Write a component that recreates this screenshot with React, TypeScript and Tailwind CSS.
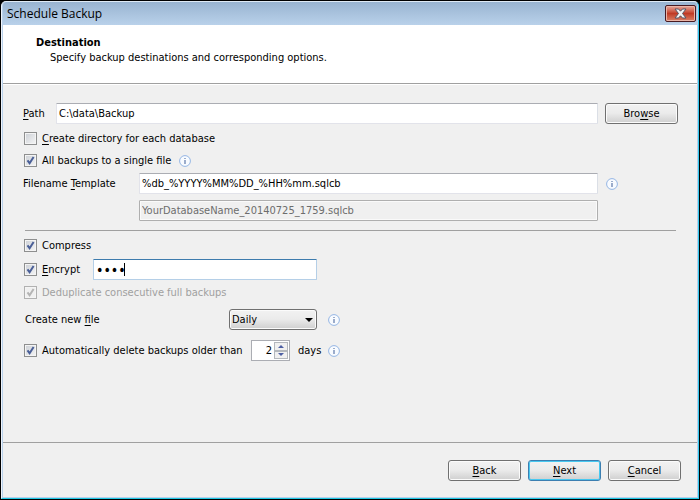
import React, { useState } from 'react';

function Key({ children }: { children: React.ReactNode }) {
  return <span className="underline decoration-1 underline-offset-2">{children}</span>;
}

function InfoIcon({ className = '' }: { className?: string }) {
  return (
    <svg role="img" aria-label="Information" width="12" height="12" viewBox="0 0 12 12" className={`shrink-0 ${className}`}>
      <circle cx="6" cy="6" r="5.4" fill="#f8fbff" stroke="#94b6e4" strokeWidth="1" />
      <rect x="5.5" y="3" width="1" height="1" fill="#3f5f98" />
      <rect x="5.5" y="5" width="1" height="4" fill="#3f5f98" />
    </svg>
  );
}

type CheckProps = {
  id: string;
  defaultChecked?: boolean;
  disabled?: boolean;
  children: React.ReactNode;
};

function Check({ id, defaultChecked = false, disabled = false, children }: CheckProps) {
  const [on, setOn] = useState(defaultChecked);
  const boxTone = disabled
    ? 'border-[#b1b1b1] bg-[#f0f0f0]'
    : 'border-[#8e8f8f] bg-linear-to-br from-[#cbcfd5] to-[#f6f6f6]';
  return (
    <div className="flex items-center pl-px">
      <span className="relative flex size-[13px] shrink-0">
        <input
          id={id}
          type="checkbox"
          checked={on}
          disabled={disabled}
          onChange={(e) => setOn(e.target.checked)}
          className={`size-[13px] appearance-none border shadow-[inset_0_0_0_1px_#f4f4f4] ${boxTone}`}
        />
        {on && (
          <svg className="pointer-events-none absolute inset-0" width="13" height="13" viewBox="0 0 13 13" fill="none">
            <path d="M3.5 6.3L5.6 9.2L9.6 3" stroke={disabled ? '#b4b4b4' : '#4a5f97'} strokeWidth="2" />
          </svg>
        )}
      </span>
      <label htmlFor={id} className={`pl-[5px] whitespace-nowrap ${disabled ? 'text-[#a0a0a0]' : ''}`}>
        {children}
      </label>
    </div>
  );
}

const row = 'flex h-[21px] items-center';
const field =
  'h-[21px] min-w-0 border border-[#e2e3ea] border-t-[#abadb3] border-r-[#dbdfe6] bg-white px-0.5 text-black outline-none rounded-[1px]';
const face = 'bg-linear-to-b from-[#f2f2f2] from-0% via-[#ebebeb] via-48% to-[#cfcfcf] to-100%';

function PushButton({ primary = false, children }: { primary?: boolean; children: React.ReactNode }) {
  const tone = primary
    ? 'border-[#3c7fb1] shadow-[inset_0_0_0_1px_#48c8f0]'
    : 'border-[#707070] shadow-[inset_0_0_0_1px_#fbfbfb]';
  return (
    <button
      type="button"
      className={`h-[21px] w-[73px] shrink-0 rounded-[3px] border leading-none ${face} ${tone}`}
    >
      {children}
    </button>
  );
}

export default function App() {
  return (
    <div className="flex min-h-screen flex-col bg-black p-px font-['DejaVu_Sans_Condensed','DejaVu_Sans',sans-serif] text-[11px] leading-[14px] text-black">
      <div className="flex grow flex-col rounded-t-[5px] border border-t-[#dfeaf5] border-r-[#35c9ee] border-b-[#1fc8e4] border-l-[#eef4fc] bg-[#b9d1ea] px-px pb-px">
        <header className="flex h-[23px] shrink-0 items-center justify-between rounded-t-[4px] bg-linear-to-b from-[#99b4d1] to-[#b9d1ea] pr-px pl-1">
          <h1 className="font-['Open_Sans','Noto_Sans',sans-serif] text-[12px] leading-4">Schedule Backup</h1>
          <button
            type="button"
            aria-label="Close"
            className="flex h-[17px] w-[31px] items-center justify-center rounded-[2px] border border-[#471a22] bg-linear-to-b from-[#e6a79b] from-0% via-[#c03a25] via-50% to-[#d97f65] to-100% shadow-[inset_0_0_0_1px_#eab5a8]"
          >
            <svg width="13" height="11" viewBox="0 0 13 11">
              <path d="M1 1H4.5L6.5 3.2L8.5 1H12L8.5 5.5L12 10H8.5L6.5 7.8L4.5 10H1L4.5 5.5Z" fill="#f4f4f4" stroke="#535666" strokeWidth="1" />
            </svg>
          </button>
        </header>

        <section className="h-[59px] shrink-0 border-b border-[#a0a0a0] bg-white pt-2.5 pl-[33px]">
          <h2 className="font-bold leading-[15px]">Destination</h2>
          <p className="pl-3.5 leading-[15px]">Specify backup destinations and corresponding options.</p>
        </section>

        <main className="grow border-t border-white bg-[#f0f0f0] pt-[18px] pr-[19px] pl-5">
          <div className={row}>
            <label htmlFor="path" className="w-[33px] shrink-0">
              <Key>P</Key>ath
            </label>
            <input id="path" type="text" defaultValue="C:\data\Backup" className={`grow ${field}`} />
            <div className="flex pl-[7px]">
              <PushButton>
                Bro<Key>w</Key>se
              </PushButton>
            </div>
          </div>
          <div className={`mt-1 ${row}`}>
            <Check id="directory">
              <Key>C</Key>reate directory for each database
            </Check>
          </div>
          <div className={`mt-px ${row}`}>
            <Check id="single" defaultChecked>
              All backups to a single file
            </Check>
            <InfoIcon className="ml-2" />
          </div>
          <div className={`mt-0.5 ${row}`}>
            <label htmlFor="template" className="w-[116px] shrink-0">
              Filename <Key>T</Key>emplate
            </label>
            <input id="template" type="text" defaultValue="%db_%YYYY%MM%DD_%HH%mm.sqlcb" className={`grow ${field}`} />
            <div className="w-20 shrink-0 pl-2">
              <InfoIcon />
            </div>
          </div>
          <div className="mt-1.5 flex h-[21px] pr-20 pl-[116px]">
            <input
              type="text"
              aria-label="Filename preview"
              disabled
              defaultValue="YourDatabaseName_20140725_1759.sqlcb"
              className="h-[21px] min-w-0 grow rounded-[1px] border border-[#afafaf] bg-[#f0f0f0] px-0.5 text-[#6d6d6d] shadow-[inset_0_0_0_1px_#fafafa]"
            />
          </div>
          <hr className="mt-[9px] mr-0.5 ml-0.5 border-t border-[#a0a0a0]" />
          <div className={`mt-1 ${row}`}>
            <Check id="compress" defaultChecked>
              Compress
            </Check>
          </div>
          <div className={`mt-[3px] ${row}`}>
            <div className="w-[70px] shrink-0">
              <Check id="encrypt" defaultChecked>
                <Key>E</Key>ncrypt
              </Check>
            </div>
            <div className="relative flex">
              <input
                type="password"
                aria-label="Encryption password"
                defaultValue="pass"
                className="h-[21px] w-56 rounded-[1px] border border-[#b5cfe7] border-t-[#3d7bad] bg-white px-0.5 text-[14px] outline-none"
              />
              <span className="absolute top-1 left-[31px] h-[13px] w-px bg-black" />
            </div>
          </div>
          <div className={`mt-0.5 ${row}`}>
            <Check id="deduplicate" defaultChecked disabled>
              Deduplicate consecutive full backups
            </Check>
          </div>
          <div className={`mt-1.5 ${row}`}>
            <label htmlFor="frequency" className="w-[206px] shrink-0 pl-0.5">
              Create new <Key>f</Key>ile
            </label>
            <div className="relative flex">
              <select
                id="frequency"
                className={`h-[21px] w-[88px] appearance-none rounded-[3px] border border-[#707070] pl-0.5 leading-none shadow-[inset_0_0_0_1px_#fbfbfb] ${face}`}
              >
                <option>Daily</option>
                <option>Weekly</option>
                <option>Monthly</option>
              </select>
              <svg className="pointer-events-none absolute top-[9px] right-1" width="8" height="4" viewBox="0 0 8 4">
                <path d="M0 0H8L4 4Z" fill="#000" />
              </svg>
            </div>
            <InfoIcon className="ml-[11px]" />
          </div>
          <div className={`mt-2.5 ${row}`}>
            <div className="w-[228px] shrink-0">
              <Check id="autodelete" defaultChecked>
                Automatically delete backups older than
              </Check>
            </div>
            <div className="flex h-[21px] w-[39px] border border-[#abadb3] bg-white">
              <input
                id="days"
                type="text"
                inputMode="numeric"
                defaultValue="2"
                className="w-[22px] pr-0.5 text-right outline-none"
              />
              <div className="flex grow flex-col py-px pr-px">
                <button type="button" aria-label="Increase" className="flex grow items-center justify-center border border-[#b4b8bd] bg-[#f0f0f0]">
                  <svg width="6" height="3" viewBox="0 0 6 3">
                    <path d="M0 3H6L3 0Z" fill="#4d5fa3" />
                  </svg>
                </button>
                <button type="button" aria-label="Decrease" className="flex grow items-center justify-center border border-[#b4b8bd] bg-[#f0f0f0]">
                  <svg width="6" height="3" viewBox="0 0 6 3">
                    <path d="M0 0H6L3 3Z" fill="#4d5fa3" />
                  </svg>
                </button>
              </div>
            </div>
            <label htmlFor="days" className="w-[38px] shrink-0 pl-2">
              days
            </label>
            <InfoIcon />
          </div>
        </main>

        <footer className="flex h-[55px] shrink-0 items-start justify-end gap-[7px] border-t border-[#a0a0a0] bg-[#f0f0f0] pt-[17px] pr-4">
          <PushButton>
            <Key>B</Key>ack
          </PushButton>
          <PushButton primary>
            <Key>N</Key>ext
          </PushButton>
          <PushButton>
            <Key>C</Key>ancel
          </PushButton>
        </footer>
      </div>
    </div>
  );
}
